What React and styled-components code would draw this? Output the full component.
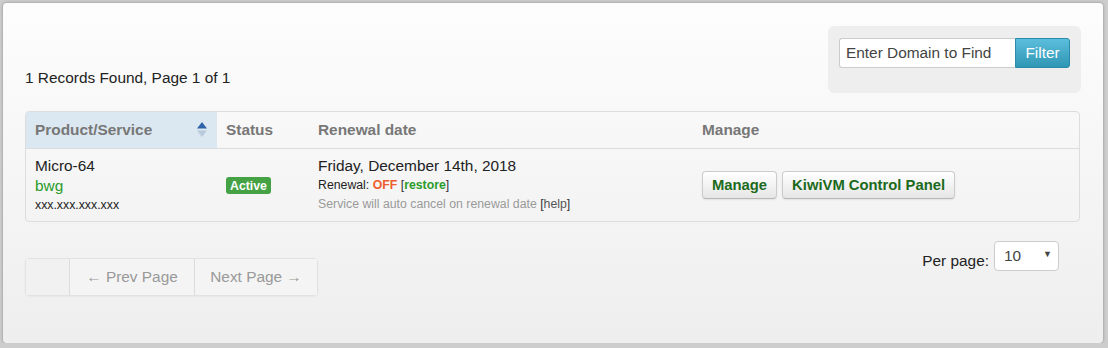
import React from 'react';
import styled, { createGlobalStyle } from 'styled-components';

const GlobalStyle = createGlobalStyle`
  body {
    margin: 0;
    background: #cdcdcd;
    font-family: "Liberation Sans", Arial, sans-serif;
    color: #222;
  }
`;

const Panel = styled.div`
  margin: 3px 0 0 3px;
  width: 1100px;
  height: 340px;
  box-sizing: border-box;
  padding: 23px 23px 0 22px;
  border-radius: 4px;
  background: linear-gradient(#fdfdfd, #eeeeee);
  box-shadow: 0 0 3px rgba(0, 0, 0, 0.35);
`;

const TopRow = styled.div`
  display: flex;
  justify-content: space-between;
  align-items: flex-start;
`;

const Records = styled.div`
  margin-top: 42px;
  font-size: 15.4px;
  line-height: 20px;
`;

const FilterBox = styled.div`
  display: flex;
  width: 253px;
  box-sizing: border-box;
  padding: 12px 11px 25px;
  margin-right: -1px;
  background: #eeeeee;
  border-radius: 6px;
`;

const Input = styled.input`
  width: 176px;
  height: 30px;
  box-sizing: border-box;
  padding: 0 6px;
  border: 1px solid #ccc;
  border-right: none;
  border-radius: 3px 0 0 3px;
  font: 15.4px "Liberation Sans", Arial, sans-serif;
  color: #444;
  &::placeholder { color: #444; }
`;

const FilterButton = styled.button`
  width: 55px;
  height: 30px;
  border: 1px solid #2a8aa8;
  border-radius: 0 3px 3px 0;
  background: linear-gradient(#5bbedc, #2f96b4);
  color: #fff;
  font: 15.4px "Liberation Sans", Arial, sans-serif;
  padding: 0;
`;

const Table = styled.div`
  margin-top: 18px;
  border: 1px solid #ddd;
  border-radius: 4px;
  display: grid;
  grid-template-columns: 191px 92px 384px 1fr;
  overflow: hidden;
`;

const HeadCell = styled.div`
  height: 36px;
  display: flex;
  align-items: center;
  justify-content: space-between;
  padding: 0 9px;
  font-size: 15.4px;
  font-weight: bold;
  color: #777;
  background: ${(p) => (p.$sorted ? '#dce8f1' : 'transparent')};
  border-bottom: 1px solid #ddd;
`;

const Cell = styled.div`
  padding: ${(p) => (p.$middle ? '0 9px' : '7px 9px')};
  display: flex;
  flex-direction: ${(p) => (p.$row ? 'row' : 'column')};
  gap: ${(p) => (p.$row ? '5px' : '0')};
  justify-content: ${(p) => (p.$middle && !p.$row ? 'center' : 'flex-start')};
  align-items: ${(p) => (p.$row ? 'center' : 'flex-start')};
  height: 72px;
  box-sizing: border-box;
`;

const Line = styled.div`
  font-size: ${(p) => (p.$small ? 12.3 : 15.4)}px;
  line-height: ${(p) => (p.$small ? 19 : 20)}px;
  color: ${(p) => p.$color || '#222'};
`;

const Label = styled.span`
  background: #44a244;
  color: #fff;
  font-size: 12.3px;
  font-weight: bold;
  padding: 2px 4px 1px;
  border-radius: 3px;
  line-height: 14px;
`;

const Off = styled.b`
  color: #f05b2b;
`;

const Restore = styled.b`
  color: #2b9b2b;
`;

const Help = styled.span`
  color: #555;
`;

const Bracket = styled.span`
  color: #333;
`;

const ActionButton = styled.button`
  height: 28px;
  padding: 0 9px;
  border: 1px solid #ccc;
  border-bottom-color: #b8b8b8;
  border-radius: 4px;
  background: linear-gradient(#ffffff, #e6e6e6);
  box-shadow: 0 1px 2px rgba(0, 0, 0, 0.08);
  color: #1c6a1c;
  font: bold 14.8px "Liberation Sans", Arial, sans-serif;
`;

const BottomRow = styled.div`
  display: flex;
  justify-content: space-between;
  align-items: flex-start;
`;

const Pager = styled.div`
  margin-top: 36px;
  display: flex;
  border: 1px solid #e2e2e2;
  border-radius: 4px;
  box-shadow: 0 1px 2px rgba(0, 0, 0, 0.04);
`;

const PageItem = styled.div`
  width: ${(p) => p.$w}px;
  height: 36px;
  display: flex;
  align-items: center;
  justify-content: center;
  font-size: 15.4px;
  color: #999;
  border-left: ${(p) => (p.$first ? 'none' : '1px solid #dcdcdc')};
  background: ${(p) => (p.$first ? '#f1f1f1' : '#f4f4f4')};
`;

const PerPage = styled.div`
  margin-top: 19px;
  margin-right: 21px;
  display: flex;
  align-items: center;
  gap: 5px;
  font-size: 15.4px;
  color: #222;
`;

const PerPageLabel = styled.span`
  padding-top: 10px;
`;

const Select = styled.div`
  width: 65px;
  height: 30px;
  box-sizing: border-box;
  border: 1px solid #ccc;
  border-radius: 4px;
  background: #fff;
  display: flex;
  align-items: center;
  justify-content: space-between;
  padding: 0 6px 0 9px;
  color: #444;
  font-size: 15.4px;
`;

const Caret = styled.span`
  font-size: 9px;
  color: #444;
  margin-top: -4px;
`;

function SortIcon() {
  return (
    <svg width="12" height="18" viewBox="0 0 12 18">
      <path d="M6 1 L11 7.5 L1 7.5 Z" fill="#2f63a8" />
      <path d="M1 9.5 L11 9.5 L6 16 Z" fill="#b9cada" />
    </svg>
  );
}

export default function App() {
  return (
    <>
      <GlobalStyle />
      <Panel>
        <TopRow>
          <Records>1 Records Found, Page 1 of 1</Records>
          <FilterBox>
            <Input placeholder="Enter Domain to Find" />
            <FilterButton>Filter</FilterButton>
          </FilterBox>
        </TopRow>
        <Table>
          <HeadCell $sorted>
            Product/Service
            <SortIcon />
          </HeadCell>
          <HeadCell>Status</HeadCell>
          <HeadCell>Renewal date</HeadCell>
          <HeadCell>Manage</HeadCell>

          <Cell>
            <Line>Micro-64</Line>
            <Line $color="#2a9a2a">bwg</Line>
            <Line $small>xxx.xxx.xxx.xxx</Line>
          </Cell>
          <Cell $middle>
            <Label>Active</Label>
          </Cell>
          <Cell>
            <Line>Friday, December 14th, 2018</Line>
            <Line $small>
              Renewal: <Off>OFF</Off> <Bracket>[</Bracket>
              <Restore>restore</Restore>
              <Bracket>]</Bracket>
            </Line>
            <Line $small $color="#9a9a9a">
              Service will auto cancel on renewal date <Bracket>[</Bracket>
              <Help>help</Help>
              <Bracket>]</Bracket>
            </Line>
          </Cell>
          <Cell $middle $row>
            <ActionButton>Manage</ActionButton>
            <ActionButton>KiwiVM Control Panel</ActionButton>
          </Cell>
        </Table>
        <BottomRow>
          <Pager>
            <PageItem $w={43} $first />
            <PageItem $w={124}>← Prev Page</PageItem>
            <PageItem $w={122}>Next Page →</PageItem>
          </Pager>
          <PerPage>
            <PerPageLabel>Per page:</PerPageLabel>
            <Select>
              10
              <Caret>▼</Caret>
            </Select>
          </PerPage>
        </BottomRow>
      </Panel>
    </>
  );
}
